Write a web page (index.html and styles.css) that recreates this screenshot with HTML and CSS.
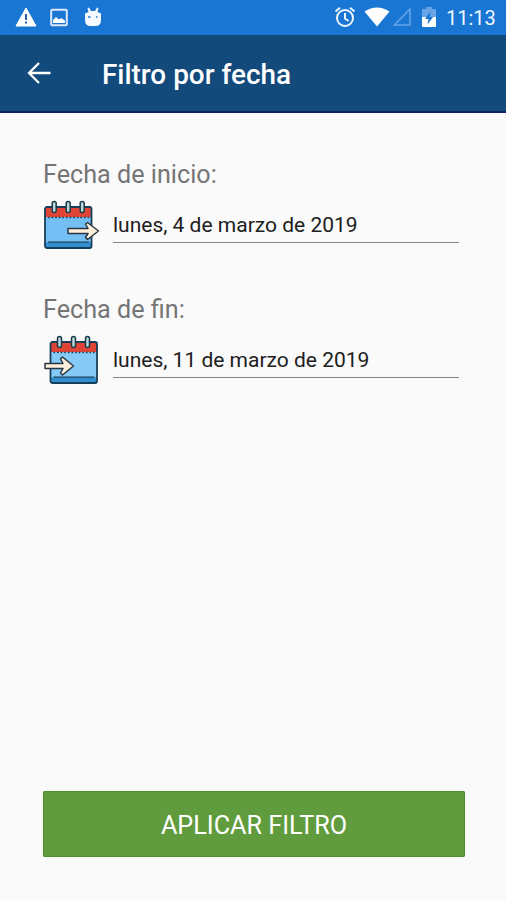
FILE: index.html
```html
<!DOCTYPE html>
<html lang="es">
<head>
<meta charset="utf-8">
<title>Filtro por fecha</title>
<link rel="stylesheet" href="styles.css">
</head>
<body>
<div class="screen">
  <div class="status">
    <div class="status-left">
      <svg width="22" height="20" viewBox="0 0 22 20"><path d="M11 1 21 19H1Z" fill="#fff" stroke="#fff" stroke-linejoin="round"/><path d="M11 7v6M11 14.500v2" stroke="#2860a8" stroke-width="2"/></svg>
      <svg width="18" height="19" viewBox="0 0 18 19"><rect x="1.200" y="1.700" width="15.600" height="15.600" rx="1" fill="none" stroke="#dce8ff" stroke-width="2"/><path d="M3 15V12l3-3 3 2.500 2-1.500 4 2.500V15Z" fill="#fff"/></svg>
      <svg width="18" height="20" viewBox="0 0 18 20"><path d="M1 6.500 4.500 5 3.500 1 5 .5 7 4h4l2-3.500 1.500.5-1 4L17 6.500V13q0 6-5.500 6h-5Q1 19 1 13Z" fill="#f4f8ff"/><path d="M4 10h2.500M12 10h1.500" stroke="#5e98dc" stroke-width="1.800"/></svg>
    </div>
    <div class="status-right">
      <svg class="alarm" width="22" height="22" viewBox="0 0 22 22" fill="none" stroke="#edf5ff" stroke-width="2"><circle cx="11" cy="12" r="8"/><path d="M11 7v5.500l3.500 2.500M1.500 5.500 6 1.700M20.500 5.500 16 1.700"/></svg>
      <svg class="wifi" width="26" height="20" viewBox="0 0 26 20"><path d="M.5 4.500Q13-3.500 25.500 4.500L13 19.500Z" fill="#fff"/></svg>
      <svg class="signal" width="20" height="20" viewBox="0 0 20 20"><path d="M2.500 18H18V2Z" fill="none" stroke="#62a3e8" stroke-width="1.600"/></svg>
      <svg class="battery" width="14" height="20" viewBox="0 0 14 20"><path d="M0 3q0-1 1-1h3V0h6v2h3q1 0 1 1v8H0Z" fill="#69a5e6"/><path d="M0 10h14v9q0 1-1 1H1q-1 0-1-1Z" fill="#fff"/><path d="M8.500 4.500 3 12h3.500l-1 5.500L11 10H7.700Z" fill="#1976d2"/></svg>
      <span class="clock">11:13</span>
    </div>
  </div>
  <header class="bar">
    <svg width="26" height="24" viewBox="0 0 26 24" fill="none" stroke="#fff" stroke-width="2.300"><path d="M13 2 3 12l10 10M3 12h21.500"/></svg>
    <h1>Filtro por fecha</h1>
  </header>
  <main class="content">
    <section class="field">
      <label class="label">Fecha de inicio:</label>
      <div class="row">
        <svg class="calendar" width="58" height="52" viewBox="0 0 58 52">
          <rect x="2" y="8" width="46.500" height="41" rx="2" fill="#73bff3"/>
          <path d="M2.500 43.500H48V47q0 2-2 2H4.500q-2 0-2-2Z" fill="#318fd0"/>
          <path d="M2 18V10q0-2 2-2h42.500q2 0 2 2v8Z" fill="#e04434"/>
          <path d="M5 18.500h41" stroke="#203647" stroke-width="1.500" stroke-dasharray="1.600 2"/>
          <rect x="2" y="8" width="46.500" height="41" rx="2" fill="none" stroke="#173e58" stroke-width="1.800"/>
          <path d="M5 43.200h41" stroke="#173e58" stroke-width="1.300"/>
          <g fill="#bdd7d6" stroke="#183b4b" stroke-width="1.500"><rect x="9.200" y="2.500" width="4" height="11" rx="2"/><rect x="23.200" y="2.500" width="4" height="11" rx="2"/><rect x="37.200" y="2.500" width="4" height="11" rx="2"/></g>
          <path d="M25 29.500H45L42.500 25 44.500 23.500 55.500 32 44.500 40.500 42.500 38.500 45 34.500H25Z" fill="#fff0dc" stroke="#293745" stroke-width="1.500" stroke-linejoin="round"/>
        </svg>
        <div class="date">lunes, 4 de marzo de 2019</div>
      </div>
    </section>
    <section class="field">
      <label class="label">Fecha de fin:</label>
      <div class="row">
        <svg class="calendar" width="58" height="52" viewBox="0 0 58 52">
          <rect x="7.500" y="8" width="46.500" height="41" rx="2" fill="#86caf7"/>
          <path d="M8 43.500h45.500V47q0 2-2 2H10q-2 0-2-2Z" fill="#318fd0"/>
          <path d="M7.500 18V10q0-2 2-2H52q2 0 2 2v8Z" fill="#e04434"/>
          <path d="M10.500 18.500h41" stroke="#203647" stroke-width="1.500" stroke-dasharray="1.600 2"/>
          <rect x="7.500" y="8" width="46.500" height="41" rx="2" fill="none" stroke="#173e58" stroke-width="1.800"/>
          <path d="M10.500 43.200h41" stroke="#173e58" stroke-width="1.300"/>
          <g fill="#bdd7d6" stroke="#183b4b" stroke-width="1.500"><rect x="14.500" y="2.500" width="4" height="11" rx="2"/><rect x="28.500" y="2.500" width="4" height="11" rx="2"/><rect x="42.500" y="2.500" width="4" height="11" rx="2"/></g>
          <path d="M2 29.500H20L17.500 25 19.500 23 30.500 32 19.500 41 17.500 39 20 34.500H2Z" fill="#fff0dc" stroke="#293745" stroke-width="1.500" stroke-linejoin="round"/>
        </svg>
        <div class="date">lunes, 11 de marzo de 2019</div>
      </div>
    </section>
    <button class="apply" type="button">APLICAR FILTRO</button>
  </main>
</div>
</body>
</html>
```
FILE: styles.css
```css
* { box-sizing: border-box; }
body { margin: 0; font-family: Roboto, sans-serif; background: #fafafa; }
svg { display: block; flex: none; }
.screen { height: 900px; display: flex; flex-direction: column; background: #fafafa; }
.status { height: 35px; flex: none; display: flex; justify-content: space-between; background: #1976d2; color: #edf5ff; padding: 0 10px 1px 15px; }
.status-left { display: flex; align-items: center; gap: 13px; }
.status-left svg:nth-child(3) { margin-left: 3px; }
.status-right { display: flex; align-items: center; }
.wifi { margin-left: 8px; }
.signal { margin-left: 2px; }
.battery { margin-left: 10px; }
.clock { margin-left: 10px; font-size: 20px; line-height: 34px; width: 50px; padding-top: 1px; white-space: nowrap; }
.bar { height: 78px; flex: none; display: flex; align-items: center; padding: 0 0 1px 26px; background: #134a7c; border-bottom: 2px solid #10216b; color: #fff; }
h1 { margin: 4px 0 0 50px; font-size: 27.900px; line-height: 36px; font-weight: 500; white-space: nowrap; }
.content { flex: 1; display: flex; flex-direction: column; padding: 43px 41px 43px 43px; }
.field { height: 135px; }
.label { display: block; height: 43px; padding-top: 1px; font-size: 25.200px; line-height: 36px; color: #757575; white-space: nowrap; }
.row { display: flex; }
.date { width: 346px; height: 44px; margin-left: 12px; padding-top: 11px; border-bottom: 1.500px solid #858585; font-size: 21px; line-height: 30px; color: #202020; white-space: nowrap; }
.apply { margin: auto 0 0; width: 422px; height: 66px; border: 0; border-radius: 2px; background: #609c3d; box-shadow: inset 0 0 0 1px #4f932d; color: #fff; font: 400 25.200px/66px Roboto, sans-serif; padding: 2px 0 0; }
```
